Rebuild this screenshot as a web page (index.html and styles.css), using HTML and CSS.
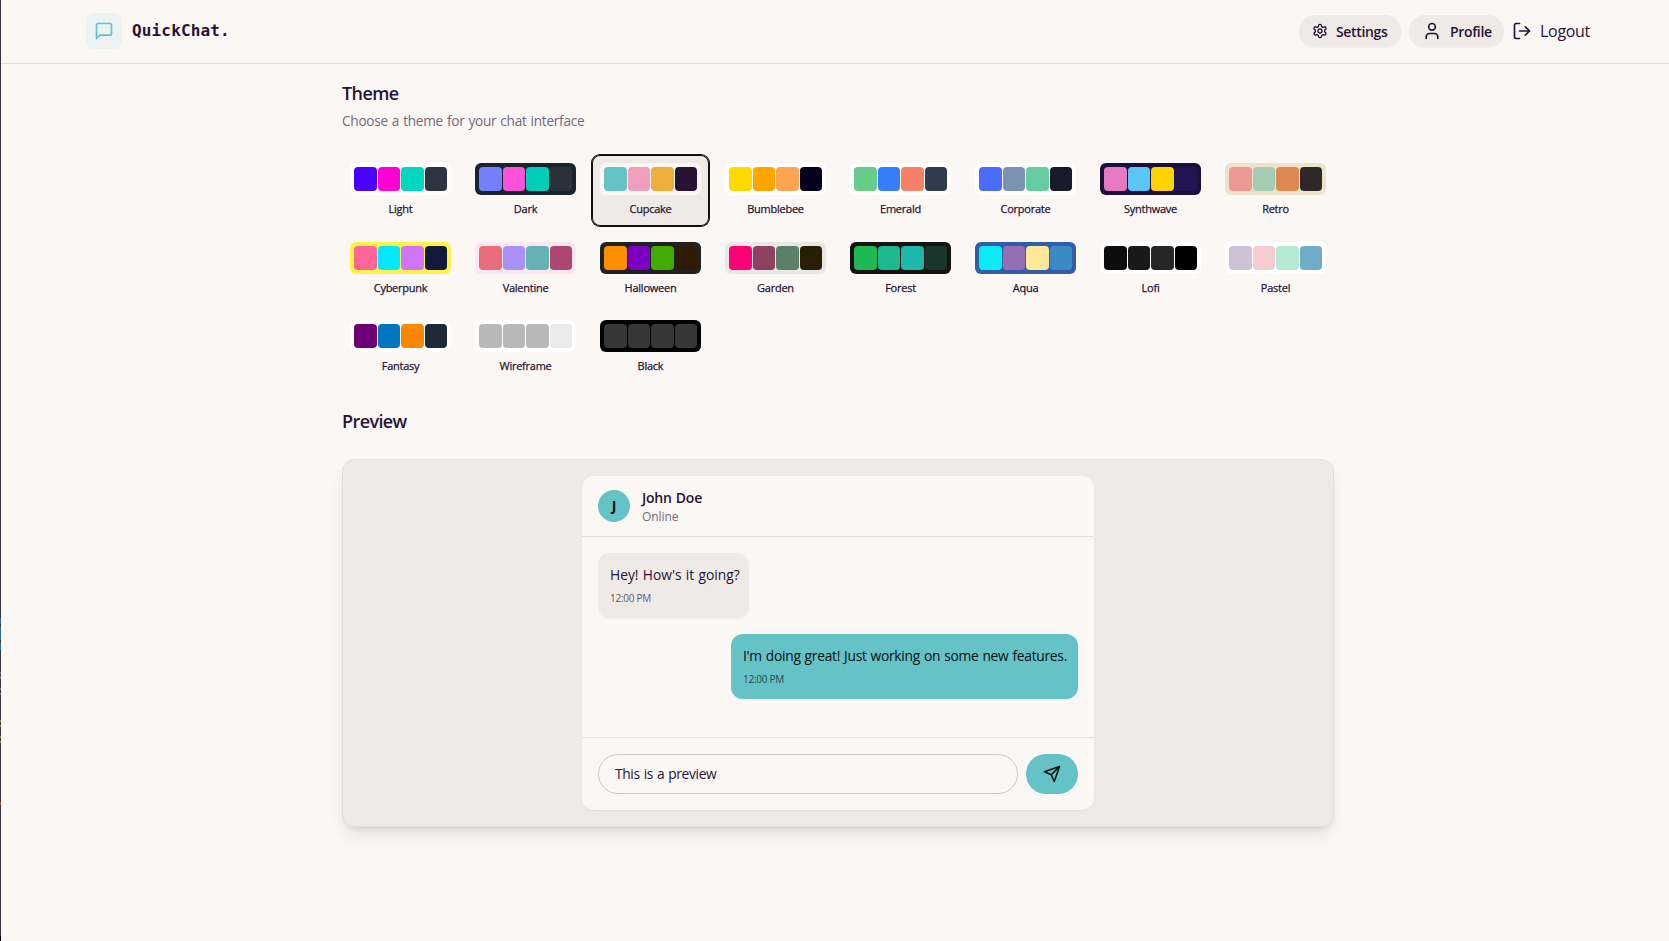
FILE: index.html
```html
<!DOCTYPE html>
<html lang="en">
<head>
<meta charset="utf-8">
<title>QuickChat</title>
<link rel="stylesheet" href="styles.css">
</head>
<body>
<div class="edge"></div>
<div class="app">
  <header class="navbar">
    <div class="brand">
      <span class="brand-mark"><svg class="icon i20" viewBox="0 0 24 24"><path d="M21 15a2 2 0 0 1-2 2H7l-4 4V5a2 2 0 0 1 2-2h14a2 2 0 0 1 2 2z"/></svg></span>
      <span class="brand-name">QuickChat.</span>
    </div>
    <nav class="nav">
      <a class="pill pill-settings"><svg class="icon i16" viewBox="0 0 24 24"><path d="M12.22 2h-.44a2 2 0 0 0-2 2v.18a2 2 0 0 1-1 1.73l-.43.25a2 2 0 0 1-2 0l-.15-.08a2 2 0 0 0-2.73.73l-.22.38a2 2 0 0 0 .73 2.73l.15.1a2 2 0 0 1 1 1.72v.51a2 2 0 0 1-1 1.74l-.15.09a2 2 0 0 0-.73 2.73l.22.38a2 2 0 0 0 2.73.73l.15-.08a2 2 0 0 1 2 0l.43.25a2 2 0 0 1 1 1.73V20a2 2 0 0 0 2 2h.44a2 2 0 0 0 2-2v-.18a2 2 0 0 1 1-1.73l.43-.25a2 2 0 0 1 2 0l.15.08a2 2 0 0 0 2.73-.73l.22-.39a2 2 0 0 0-.73-2.73l-.15-.08a2 2 0 0 1-1-1.74v-.5a2 2 0 0 1 1-1.74l.15-.09a2 2 0 0 0 .73-2.73l-.22-.38a2 2 0 0 0-2.73-.73l-.15.08a2 2 0 0 1-2 0l-.43-.25a2 2 0 0 1-1-1.73V4a2 2 0 0 0-2-2z"/><circle cx="12" cy="12" r="3"/></svg><span>Settings</span></a>
      <a class="pill pill-profile"><svg class="icon i20" viewBox="0 0 24 24"><path d="M19 21v-2a4 4 0 0 0-4-4H9a4 4 0 0 0-4 4v2"/><circle cx="12" cy="7" r="4"/></svg><span>Profile</span></a>
      <a class="logout"><svg class="icon i20" viewBox="0 0 24 24"><path d="M9 21H5a2 2 0 0 1-2-2V5a2 2 0 0 1 2-2h4"/><path d="m16 17 5-5-5-5"/><path d="M21 12H9"/></svg><span>Logout</span></a>
    </nav>
  </header>
  <main class="content">
    <h2 class="title">Theme</h2>
    <p class="subtitle">Choose a theme for your chat interface</p>
    <div class="themes" id="themes"></div>
    <h2 class="title preview-title">Preview</h2>
    <section class="preview">
      <div class="card">
        <div class="card-head">
          <div class="avatar">J</div>
          <div><div class="name">John Doe</div><div class="status">Online</div></div>
        </div>
        <div class="messages">
          <div class="bubble"><p class="hey">Hey! How's it going?</p><time>12:00 PM</time></div>
          <div class="bubble mine"><p>I'm doing great! Just working on some new features.</p><time>12:00 PM</time></div>
        </div>
        <div class="composer">
          <div class="input">This is a preview</div>
          <div class="send"><svg class="icon i18" viewBox="0 0 24 24"><path d="m22 2-7 20-4-9-9-4Z"/><path d="M22 2 11 13"/></svg></div>
        </div>
      </div>
    </section>
  </main>
</div>
<script src="themes.js"></script>
</body>
</html>
```
FILE: styles.css
```css
* { box-sizing: border-box; margin: 0; padding: 0; }
body {
  display: flex;
  height: 941px;
  overflow: hidden;
  background: #faf7f5;
  color: #291334;
  font-family: "Open Sans", "Noto Sans", sans-serif;
}
.edge {
  width: 1px;
  flex: none;
  background: linear-gradient(#35333d 618px, #2d6aa8 618px 624px, #35333d 624px 627px, #2d6aa8 627px 640px, #35333d 640px 643px, #2d6aa8 643px 650px, #35333d 650px 672px, #77757c 672px 674px, #35333d 674px 676px, #77757c 676px 679px, #35333d 679px 688px, #77706f 688px 690px, #35333d 690px 693px, #77706f 693px 695px, #35333d 695px 720px, #a07d35 720px 722px, #35333d 722px 725px, #a07d35 725px 727px, #35333d 727px 736px, #a07d35 736px 738px, #35333d 738px 741px, #a07d35 741px 743px, #35333d 743px 802px, #9a5038 802px 805px, #35333d 805px 935px, #000 937px);
}
.app { flex: 1; }
.icon { fill: none; stroke: currentColor; stroke-width: 2; stroke-linecap: round; stroke-linejoin: round; flex: none; }
.i16 { width: 16px; height: 16px; }
.i18 { width: 18px; height: 18px; }
.i20 { width: 20px; height: 20px; }

.navbar {
  display: flex;
  align-items: center;
  justify-content: space-between;
  height: 64px;
  padding: 0 78px 1px 85px;
  border-bottom: 1px solid #e3dedc;
}
.brand { display: flex; align-items: center; gap: 10px; }
.brand-mark { display: flex; align-items: center; justify-content: center; width: 36px; height: 36px; border-radius: 8px; background: #ebf2f0; color: #65c3c8; }
.brand-name { font: bold 16px/24px "DejaVu Sans Mono", monospace; letter-spacing: .15px; }
.nav { display: flex; align-items: center; gap: 8px; }
.pill { display: flex; align-items: center; gap: 8px; height: 32px; padding-left: 13px; border-radius: 16px; background: #efeae6; font-size: 14px; font-weight: 600; box-shadow: 0 1px 2px rgba(0,0,0,.05); letter-spacing: -.35px; white-space: nowrap; }
.pill-settings { width: 102px; }
.pill-profile { width: 95px; }
.logout { display: flex; align-items: center; gap: 8px; width: 79px; font-size: 16px; letter-spacing: -.3px; white-space: nowrap; }

.content { width: 992px; margin-left: 341px; padding-top: 15px; }
.title { font-size: 18px; line-height: 28px; font-weight: 600; letter-spacing: -.6px; }
.subtitle { margin-top: 4px; font-size: 13.6px; line-height: 20px; color: #766a7b; letter-spacing: -.25px; word-spacing: .7px; }
.themes { display: grid; grid-template-columns: repeat(8, 1fr); gap: 8px; margin-top: 24px; }
.theme { display: flex; flex-direction: column; gap: 6px; height: 70.5px; padding: 8px; border-radius: 8px; }
.theme.active { background: #efeae6; box-shadow: inset 0 0 0 1px #101010, 0 0 0 1px #101010, 0 0 0 2px #fff; }
.swatch { display: grid; grid-template-columns: repeat(4, 1fr); gap: 1px; height: 32px; padding: 4px; border-radius: 6px; }
.swatch i { border-radius: 4px; }
.label { font-size: 11px; line-height: 16.5px; font-weight: 500; text-align: center; letter-spacing: -.25px; -webkit-text-stroke: .25px currentColor; }
.preview-title { margin-top: 24px; }

.preview { margin-top: 24px; padding: 16px 0 15px; height: 368px; border: 1px solid #e4dfdc; border-radius: 12px; background: #efeae6; box-shadow: 0 10px 15px -3px rgba(0,0,0,.1), 0 4px 6px -4px rgba(0,0,0,.1); }
.card { width: 512px; margin: 0 auto; border-radius: 12px; background: #faf7f5; box-shadow: 0 1px 2px rgba(0,0,0,.05); }
.card-head { display: flex; align-items: center; gap: 12px; height: 61px; padding: 0 16px; border-bottom: 1px solid #e3dedc; }
.avatar { display: flex; align-items: center; justify-content: center; width: 32px; height: 32px; border-radius: 50%; background: #65c3c8; color: #050f10; font-size: 14px; font-weight: 700; }
.name { font-size: 14px; line-height: 20px; font-weight: 600; letter-spacing: -.2px; word-spacing: .6px; }
.status { position: relative; top: 1px; font-size: 12px; line-height: 16px; color: #766a7b; letter-spacing: -.05px; }
.messages { display: flex; flex-direction: column; align-items: flex-start; gap: 16px; height: 200px; padding: 16px; }
.bubble { width: 151px; height: 65px; padding: 12px; border-radius: 12px; background: #efeae6; box-shadow: 0 1px 2px rgba(0,0,0,.05); font-size: 13.8px; line-height: 20px; white-space: nowrap; letter-spacing: -.28px; word-spacing: .7px; }
.hey { letter-spacing: 0; }
.bubble time { display: block; margin-top: 6px; font-size: 10px; line-height: 15px; letter-spacing: -.25px; word-spacing: 0; opacity: .7; }
.bubble.mine { align-self: flex-end; width: 347px; background: #65c3c8; color: #050f10; }
.composer { display: flex; gap: 8px; padding: 16px; border-top: 1px solid #e3dedc; }
.input { flex: 1; height: 40px; padding: 0 16px; border: 1px solid #cdc7cc; border-radius: 20px; font-size: 13.8px; line-height: 38px; letter-spacing: -.35px; word-spacing: .7px; }
.send { display: flex; align-items: center; justify-content: center; width: 52px; height: 40px; border-radius: 20px; background: #65c3c8; color: #050f10; }
```
FILE: themes.js
```js
// name, base colour, primary, secondary, accent, neutral
const themes = [
  ["Light", "#ffffff", "#4a00ff", "#ff00d3", "#00d7c0", "#2b3440"],
  ["Dark", "#1d232a", "#7480ff", "#ff52d9", "#00cdb7", "#2a323c"],
  ["Cupcake", "#faf7f5", "#65c3c8", "#ef9fbc", "#eeaf3a", "#291334"],
  ["Bumblebee", "#ffffff", "#ffd900", "#ffa500", "#ffa552", "#05001f"],
  ["Emerald", "#ffffff", "#66cc8a", "#377cfb", "#f68067", "#333c4d"],
  ["Corporate", "#ffffff", "#4b6bfb", "#7b92b2", "#67cba0", "#181a2a"],
  ["Synthwave", "#1a103d", "#e779c1", "#58c7f3", "#ffd300", "#221551"],
  ["Retro", "#ece3ca", "#ef9995", "#a4cbb4", "#dc8850", "#2e282a"],
  ["Cyberpunk", "#fff248", "#ff6596", "#00e8ff", "#ce74ff", "#111a3b"],
  ["Valentine", "#fae7f4", "#e96d7b", "#a991f7", "#66b1b3", "#af4670"],
  ["Halloween", "#212121", "#ff8f00", "#7a00c2", "#42aa00", "#2f1b05"],
  ["Garden", "#e9e7e7", "#fe0075", "#8e4162", "#5c7f67", "#291e00"],
  ["Forest", "#171212", "#1eb854", "#1db88e", "#1db8ab", "#19362d"],
  ["Aqua", "#345da7", "#09ecf3", "#966fb3", "#ffe999", "#3b8ac4"],
  ["Lofi", "#ffffff", "#0d0d0d", "#1a1919", "#262626", "#000000"],
  ["Pastel", "#ffffff", "#d1c1d7", "#f6cbd1", "#b4e9d6", "#70acc7"],
  ["Fantasy", "#ffffff", "#6d0076", "#0075c2", "#ff8600", "#1f2937"],
  ["Wireframe", "#ffffff", "#b8b8b8", "#b8b8b8", "#b8b8b8", "#ebebeb"],
  ["Black", "#000000", "#373737", "#373737", "#373737", "#373737"]
];

document.getElementById("themes").innerHTML = themes.map(([name, base, ...colors]) =>
  `<div class="theme${name === "Cupcake" ? " active" : ""}">
    <div class="swatch" style="background:${base}">${colors.map(c => `<i style="background:${c}"></i>`).join("")}</div>
    <div class="label">${name}</div>
  </div>`).join("");
```
